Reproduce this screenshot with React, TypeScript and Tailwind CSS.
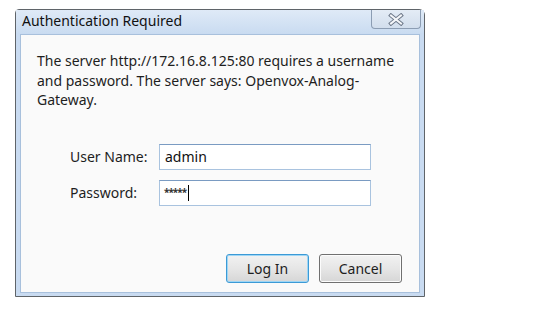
// Windows 7 style "Authentication Required" browser dialog.
function CloseGlyph() {
  return (
    <svg width="16" height="13" viewBox="0 0 16 13">
      <g strokeLinecap="square">
        <path d="M3 2.5 L13 10.5 M13 2.5 L3 10.5" stroke="#6c7788" strokeWidth="4" />
        <path d="M3 2.5 L13 10.5 M13 2.5 L3 10.5" stroke="#f4f6f9" strokeWidth="2" />
      </g>
    </svg>
  )
}

export default function App() {
  const font = { fontFamily: '"Noto Sans", "Open Sans", "DejaVu Sans", sans-serif' }
  return (
    <div className="w-[535px] h-[311px] bg-white pt-[9px] pl-[15px]" style={font}>
      <div className="w-[410px] h-[288px] flex flex-col border border-[#5f6469] rounded-tl-[4px] rounded-tr-[6px] bg-[#c9dbf1]">
        <div className="h-[23px] shrink-0 flex items-start justify-between bg-gradient-to-b from-[#dfeaf7] to-[#cadcf1] pl-[6px] pr-[3px]">
          <span className="text-[14px] leading-[22px] text-[#111]">Authentication Required</span>
          <div className="w-[50px] h-[19px] flex items-center justify-center rounded-b-[4px] border border-t-0 border-[#8c9db3] bg-gradient-to-b from-[#e4ecf6] to-[#d2deed]">
            <CloseGlyph />
          </div>
        </div>
        <div className="flex-1 mx-[4px] mb-[3px] mt-[1px] bg-[#fafafa] border border-[#a8c0dc] flex flex-col">
          <p className="pl-[16px] pr-[10px] pt-[16px] text-[14px] leading-[19.5px] text-[#1e1e1e]">
            The server http://172.16.8.125:80 requires a username and password. The server says: Openvox-Analog-Gateway.
          </p>
          <div className="mt-[34px] flex flex-col gap-[10px] pl-[49px]">
            <div className="flex items-center">
              <span className="w-[89px] text-[14px] text-[#1e1e1e]">User Name:</span>
              <div className="w-[212px] h-[26px] border border-[#a9c3df] border-t-[#7a9bc2] bg-white flex items-center px-[5px] text-[14px] text-[#111]">
                admin
              </div>
            </div>
            <div className="flex items-center">
              <span className="w-[89px] text-[14px] text-[#1e1e1e]">Password:</span>
              <div className="w-[212px] h-[26px] border border-[#a9c3df] border-t-[#7a9bc2] bg-white flex items-center pl-[4px] text-[10px] font-bold text-[#333] tracking-[-1px]">
                *****
                <span className="ml-[2px] w-[1px] h-[16px] bg-black" />
              </div>
            </div>
          </div>
          <div className="mt-auto mb-[9px] mr-[17px] flex justify-end gap-[10px]">
            <button className="w-[83px] h-[29px] rounded-[3px] border border-[#3c9ad6] shadow-[inset_0_0_0_1px_#9fd6f5] bg-gradient-to-b from-[#f2f2f2] via-[#e6e6e6] to-[#d6d6d6] text-[14px] text-[#1e1e1e]">
              Log In
            </button>
            <button className="w-[83px] h-[29px] rounded-[3px] border border-[#707070] shadow-[inset_0_0_0_1px_#fcfcfc] bg-gradient-to-b from-[#f2f2f2] via-[#e6e6e6] to-[#d6d6d6] text-[14px] text-[#1e1e1e]">
              Cancel
            </button>
          </div>
        </div>
      </div>
    </div>
  )
}
